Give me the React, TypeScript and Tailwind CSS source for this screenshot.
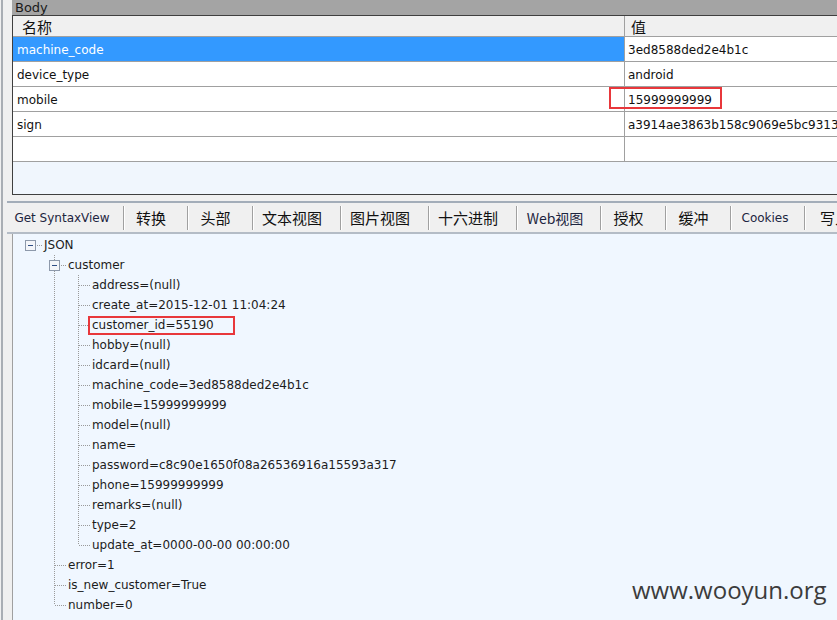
import React from 'react';

type TreeNode = { label: string; children?: TreeNode[] };

const tree: TreeNode = {
  label: 'JSON',
  children: [
    {
      label: 'customer',
      children: [
        { label: 'address=(null)' },
        { label: 'create_at=2015-12-01 11:04:24' },
        { label: 'customer_id=55190' },
        { label: 'hobby=(null)' },
        { label: 'idcard=(null)' },
        { label: 'machine_code=3ed8588ded2e4b1c' },
        { label: 'mobile=15999999999' },
        { label: 'model=(null)' },
        { label: 'name=' },
        { label: 'password=c8c90e1650f08a26536916a15593a317' },
        { label: 'phone=15999999999' },
        { label: 'remarks=(null)' },
        { label: 'type=2' },
        { label: 'update_at=0000-00-00 00:00:00' },
      ],
    },
    { label: 'error=1' },
    { label: 'is_new_customer=True' },
    { label: 'number=0' },
  ],
};

type FlatRow = { label: string; depth: number; last: boolean; open: boolean; guides: boolean[] };

function flatten(node: TreeNode, depth: number, last: boolean, guides: boolean[], out: FlatRow[]) {
  out.push({ label: node.label, depth, last, open: !!node.children, guides });
  node.children?.forEach((c, i) => {
    const isLast = i === node.children!.length - 1;
    flatten(c, depth + 1, isLast, depth === 0 ? [...guides, false] : [...guides, !last], out);
  });
  return out;
}

const rows = flatten(tree, 0, true, [], []);

const dot = { stroke: '#9a9a9a', strokeWidth: 1, strokeDasharray: '1 1' };

function Guide({ full }: { full: boolean }) {
  return (
    <svg width="24" height="20" className="shrink-0">
      {full && <line x1="12.5" y1="0" x2="12.5" y2="20" {...dot} />}
    </svg>
  );
}

function Connector({ row }: { row: FlatRow }) {
  const root = row.depth === 0;
  return (
    <svg width="24" height="20" className="shrink-0">
      {!root && <line x1="12.5" y1="0" x2="12.5" y2={row.last ? 10 : 20} {...dot} />}
      {row.open ? (
        <>
          <rect x="7.5" y="5.5" width="10" height="10" fill="#f4f6fa" stroke="#8d99ab" />
          <line x1="10" y1="10.5" x2="15" y2="10.5" stroke="#2f4f86" strokeWidth="1" />
          <line x1="19" y1="10.5" x2="24" y2="10.5" {...dot} />
        </>
      ) : (
        <line x1="13" y1="10.5" x2="24" y2="10.5" {...dot} />
      )}
    </svg>
  );
}

const tabs = [
  { label: 'Get SyntaxView', w: 118, latin: true },
  { label: '转换', w: 64 },
  { label: '头部', w: 65 },
  { label: '文本视图', w: 88 },
  { label: '图片视图', w: 88 },
  { label: '十六进制', w: 88 },
  { label: 'Web视图', w: 84, mixed: true },
  { label: '授权', w: 65 },
  { label: '缓冲', w: 65 },
  { label: 'Cookies', w: 74, latin: true },
  { label: '写入', w: 70 },
];

const params = [
  ['machine_code', '3ed8588ded2e4b1c'],
  ['device_type', 'android'],
  ['mobile', '15999999999'],
  ['sign', 'a3914ae3863b158c9069e5bc93139e2f4c1a'],
  ['', ''],
];

export default function App() {
  return (
    <div className="relative flex h-[620px] w-[837px] overflow-hidden bg-[#f0f0f0] font-['DejaVu_Sans',sans-serif] text-[12px] text-[#111]">
      <div className="ml-[1px] w-[2px] shrink-0 bg-[#a9aeb4]" />
      <div className="flex min-w-0 flex-1 flex-col">
        <div className="pl-[9px]">
          <div className="flex h-[15px] items-start bg-[#a4a4a4] pl-[3px] text-[13px] leading-[15px] text-[#1a1a1a]">Body</div>
          <div className="flex h-[180px] flex-col border-y border-l border-[#3f3f3f] bg-[#f0f6fd]">
            <div className="flex h-[21px] shrink-0 border-b border-[#a0a0a0] bg-[#f0f0f0] font-['Noto_Sans_CJK_SC',sans-serif] text-[15px] leading-none">
              <div className="flex w-[612px] shrink-0 items-center border-r border-[#a0a0a0] pl-[9px]">名称</div>
              <div className="flex items-center pl-[6px]">值</div>
            </div>
            {params.map(([k, v], i) => (
              <div key={i} className="flex h-[25px] shrink-0 border-b border-[#a0a0a0] bg-white">
                <div
                  className={
                    i === 0
                      ? 'flex w-[612px] shrink-0 items-center border-r border-[#a0a0a0] bg-[#3399ff] pl-[4px] pt-[2px] text-white'
                      : 'flex w-[612px] shrink-0 items-center border-r border-[#a0a0a0] pl-[4px] pt-[2px]'
                  }
                >
                  {k}
                </div>
                <div className="flex items-center whitespace-nowrap pl-[3px] pt-[2px]">{v}</div>
              </div>
            ))}
          </div>
        </div>
        <div className="h-[6px] shrink-0" />
        <div className="shrink-0 pl-[4px]">
          <div className="flex h-[33px] border-y-2 border-t-[#a3adb9] border-b-[#b4bcc6] bg-[#f0f0f0]">
            {tabs.map((t, i) => (
              <div key={i} className="flex shrink-0 items-center" style={{ width: t.w }}>
                <div
                  className={
                    t.latin
                      ? 'flex flex-1 justify-center pr-[6px] text-[12px] text-[#1d2540]'
                      : t.mixed
                        ? "flex flex-1 justify-center pr-[8px] font-['Noto_Sans_CJK_SC',sans-serif] text-[14px] leading-none text-[#1d2540]"
                        : "flex flex-1 justify-center pr-[10px] font-['Noto_Sans_CJK_SC',sans-serif] text-[15px] leading-none"
                  }
                >
                  {t.label}
                </div>
                <div className="h-[24px] w-[1px] bg-[#a0a0a0]" />
                <div className="h-[24px] w-[1px] bg-white" />
              </div>
            ))}
          </div>
        </div>
        <div className="flex-1 pl-[9px]">
          <div className="h-full border-l border-[#a0a0a0] bg-[#f0f7ff] pt-[1px]">
            {rows.map((r, i) => (
              <div key={i} className="flex h-[20px] items-center pl-[5px] leading-none text-[#1c1c1c]">
                {r.guides.map((g, j) => (
                  <Guide key={j} full={g} />
                ))}
                <Connector row={r} />
                <span className="ml-[2px] whitespace-nowrap">{r.label}</span>
              </div>
            ))}
          </div>
        </div>
      </div>
      <div className="pointer-events-none absolute left-[609px] top-[87px] h-[22px] w-[113px] border-2 border-[#e8373b]" />
      <div className="pointer-events-none absolute left-[88px] top-[316px] h-[19px] w-[147px] border-2 border-[#e8373b]" />
      <div className="pointer-events-none absolute left-[632px] top-[574px] font-['Open_Sans',sans-serif] text-[24px] leading-[32px] text-[#3c3c3c]">
        www.wooyun.org
      </div>
    </div>
  );
}
